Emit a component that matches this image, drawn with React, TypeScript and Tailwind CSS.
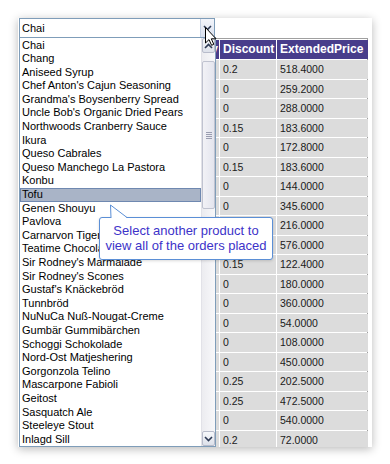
import React from "react";

const products = [
  "Chai",
  "Chang",
  "Aniseed Syrup",
  "Chef Anton's Cajun Seasoning",
  "Grandma's Boysenberry Spread",
  "Uncle Bob's Organic Dried Pears",
  "Northwoods Cranberry Sauce",
  "Ikura",
  "Queso Cabrales",
  "Queso Manchego La Pastora",
  "Konbu",
  "Tofu",
  "Genen Shouyu",
  "Pavlova",
  "Carnarvon Tigers",
  "Teatime Chocolate Biscuits",
  "Sir Rodney's Marmalade",
  "Sir Rodney's Scones",
  "Gustaf's Knäckebröd",
  "Tunnbröd",
  "NuNuCa Nuß-Nougat-Creme",
  "Gumbär Gummibärchen",
  "Schoggi Schokolade",
  "Nord-Ost Matjeshering",
  "Gorgonzola Telino",
  "Mascarpone Fabioli",
  "Geitost",
  "Sasquatch Ale",
  "Steeleye Stout",
  "Inlagd Sill",
];

// discount, extended price (the columns left of these sit under the open list)
const orders: [string, string][] = [
  ["0.2", "518.4000"],
  ["0", "259.2000"],
  ["0", "288.0000"],
  ["0.15", "183.6000"],
  ["0", "172.8000"],
  ["0.15", "183.6000"],
  ["0", "144.0000"],
  ["0", "345.6000"],
  ["0", "216.0000"],
  ["0", "576.0000"],
  ["0.15", "122.4000"],
  ["0", "180.0000"],
  ["0", "360.0000"],
  ["0", "54.0000"],
  ["0", "108.0000"],
  ["0", "450.0000"],
  ["0.25", "202.5000"],
  ["0.25", "472.5000"],
  ["0", "540.0000"],
  ["0.2", "72.0000"],
];

const Chevron = ({ up = false }: { up?: boolean }) => (
  <svg width="9" height="6" viewBox="0 0 9 6">
    <path
      d={up ? "M1 5 L4.5 1.5 L8 5" : "M1 1 L4.5 4.5 L8 1"}
      fill="none"
      stroke="#2d3a55"
      strokeWidth="1.6"
    />
  </svg>
);

const Cursor = () => (
  <svg width="12" height="19" viewBox="0 0 12 19">
    <path
      d="M0.5 0.5 L0.5 16 L4 12.6 L6.6 18.3 L8.8 17.3 L6.3 11.8 L11 11.8 Z"
      fill="#fff"
      stroke="#000"
      strokeWidth="1"
      strokeLinejoin="round"
    />
  </svg>
);

const cols = "grid-cols-[70px_70px_56px_56px_91px]";

export default function App() {
  return (
    <div className="relative w-[390px] h-[464px] bg-white pt-[18px] pl-[18px] font-['Liberation_Sans',Arial,sans-serif] text-black">
      <div className="relative w-[354px] h-[429px] bg-white shadow-[0_2px_9px_rgba(0,0,0,0.28)] overflow-hidden">
        {/* combo box */}
        <div className="ml-[1px] w-[196px] h-[20px] border border-[#7f9db9] bg-white flex items-center">
          <span className="pl-[2px] text-[11px] leading-none flex-1">Chai</span>
          <div className="w-[14px] h-[18px] border-l border-[#c3cfe2] bg-gradient-to-b from-[#f3f5fb] to-[#d9e0ee] flex items-center justify-center">
            <Chevron />
          </div>
        </div>

        {/* orders grid */}
        <div className="ml-[1px] w-[349px] border border-[#a0a0a0] bg-white p-px">
          <div className={`grid ${cols} gap-px`}>
            <div className="h-[19px] bg-[#483d8b]" />
            <div className="h-[19px] bg-[#483d8b]" />
            <div className="h-[19px] bg-[#483d8b] text-white font-bold text-[12px] leading-[19px] text-right pr-[1px] whitespace-nowrap overflow-hidden">
              Quantity
            </div>
            <div className="h-[19px] bg-[#483d8b] text-white font-bold text-[12px] leading-[19px] pl-[3px] whitespace-nowrap">
              Discount
            </div>
            <div className="h-[19px] bg-[#483d8b] text-white font-bold text-[12px] leading-[19px] pl-[3px] whitespace-nowrap">
              ExtendedPrice
            </div>
            {orders.map(([d, e], r) => (
              <React.Fragment key={r}>
                <div className="h-[18.5px] bg-[#dcdcdc]" />
                <div className="h-[18.5px] bg-[#dcdcdc]" />
                <div className="h-[18.5px] bg-[#dcdcdc]" />
                <div className="h-[18.5px] bg-[#dcdcdc] text-[#1a1a1a] text-[10.5px] leading-[18.5px] pl-[3px]">
                  {d}
                </div>
                <div className="h-[18.5px] bg-[#dcdcdc] text-[#1a1a1a] text-[10.5px] leading-[18.5px] pl-[3px]">
                  {e}
                </div>
              </React.Fragment>
            ))}
          </div>
        </div>

        {/* open dropdown list */}
        <div className="absolute left-[1px] top-[19px] w-[197px] h-[410px] border border-[#7f9db9] bg-white flex">
          <div className="flex-1 pt-[0.5px]">
            {products.map((p) => (
              <div
                key={p}
                className={`h-[13.6px] pl-[2px] text-[11px] leading-[13.6px] whitespace-nowrap overflow-hidden ${
                  p === "Tofu"
                    ? "bg-[#a9b4c7] outline outline-1 -outline-offset-1 outline-[#6f88b0]"
                    : ""
                }`}
              >
                {p}
              </div>
            ))}
          </div>
          {/* scrollbar */}
          <div className="w-[14px] h-full flex flex-col bg-gradient-to-r from-[#ececf0] to-[#f8f8fa] border-l border-[#e2e2e8]">
            <div className="h-[15px] border border-[#b8bccb] rounded-[2px] bg-gradient-to-b from-[#f7f8fb] to-[#dde1ea] flex items-center justify-center">
              <Chevron up />
            </div>
            <div className="flex-1 relative">
              <div className="absolute left-0 right-0 top-[8px] h-[148px] border border-[#c0c3d0] rounded-[2px] bg-gradient-to-r from-[#f2f2f6] to-[#e4e5ee] flex items-center justify-center">
                <div className="flex flex-col gap-[1px]">
                  <div className="w-[6px] h-px bg-[#9a9db0]" />
                  <div className="w-[6px] h-px bg-[#9a9db0]" />
                  <div className="w-[6px] h-px bg-[#9a9db0]" />
                  <div className="w-[6px] h-px bg-[#9a9db0]" />
                </div>
              </div>
            </div>
            <div className="h-[15px] border border-[#b8bccb] rounded-[2px] bg-gradient-to-b from-[#f7f8fb] to-[#dde1ea] flex items-center justify-center">
              <Chevron />
            </div>
          </div>
        </div>
      </div>

      {/* mouse cursor over the combo button */}
      <div className="absolute left-[205px] top-[27px]">
        <Cursor />
      </div>

      {/* callout */}
      <div className="absolute left-[99px] top-[217px] w-[174px] h-[43px] border border-[#5b8fd6] rounded-[3px] bg-white shadow-[0_1px_3px_rgba(0,0,0,0.15)] flex flex-col items-center justify-center text-[13px] leading-[14.3px] text-[#3d33c9] whitespace-nowrap">
        <span>Select another product to</span>
        <span>view all of the orders placed</span>
      </div>
      <svg className="absolute left-[109px] top-[203px]" width="20" height="16" viewBox="0 0 20 16">
        <polygon points="1,2 2,15 18,15" fill="#fff" />
        <polyline points="2,15 1.5,2 18,14.5" fill="none" stroke="#5b8fd6" strokeWidth="1" />
      </svg>
    </div>
  );
}
